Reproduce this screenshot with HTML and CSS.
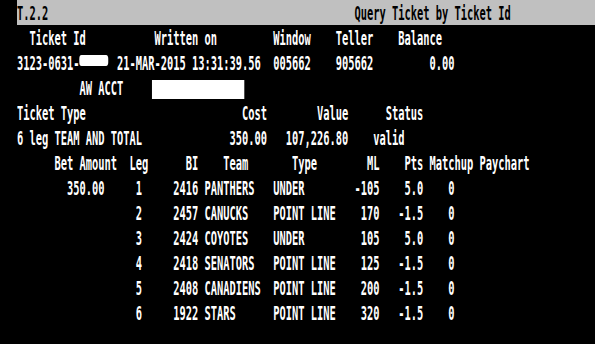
FILE: index.html
```html
<!DOCTYPE html>
<html lang="en">
<head>
    <meta charset="UTF-8">
    <meta name="viewport" content="width=device-width, initial-scale=1.0">
    <title>Query Ticket by Ticket Id</title>
    <link rel="stylesheet" href="styles.css">
</head>
<body>
    <div class="screen">
        <div class="term">
            <div class="line bar">T.2.2                                                 Query Ticket by Ticket Id</div>
            <div class="line">  Ticket Id           Written on         Window    Teller    Balance</div>
            <div class="line">3123-0631-<span class="redact-small"></span> 21-MAR-2015 13:31:39.56  005662    905662         0.00</div>
            <div class="line">          AW ACCT    <span class="redact-box"></span></div>
            <div class="line">Ticket Type                         Cost        Value      Status</div>
            <div class="line">6 leg TEAM AND TOTAL              350.00   107,226.80    valid</div>
            <div class="line">      Bet Amount  Leg      BI    Team       Type        ML    Pts Matchup Paychart</div>
            <div class="line">        350.00     1     2416 PANTHERS   UNDER        -105    5.0    0</div>
            <div class="line">                   2     2457 CANUCKS    POINT LINE    170   -1.5    0</div>
            <div class="line">                   3     2424 COYOTES    UNDER         105    5.0    0</div>
            <div class="line">                   4     2418 SENATORS   POINT LINE    125   -1.5    0</div>
            <div class="line">                   5     2408 CANADIENS  POINT LINE    200   -1.5    0</div>
            <div class="line">                   6     1922 STARS      POINT LINE    320   -1.5    0</div>
        </div>
    </div>
</body>
</html>
```

FILE: styles.css
```css
body {
    margin: 0;
    background-color: #000;
    overflow: hidden;
}
.screen {
    height: 344px;
    padding-left: 17px;
}
.term {
    width: 1060px;
    font-family: "DejaVu Sans Mono", monospace;
    font-size: 19px;
    font-weight: bold;
    color: #fff;
    transform: scaleX(0.5464); /* celdas estrechas como la consola */
    transform-origin: 0 0;
}
.line {
    height: 25px;
    padding-top: 1px;
    box-sizing: border-box;
    line-height: 24px;
    white-space: pre;
}
.bar {
    background-color: #c0c0c0;
    color: #000;
}
.redact-small {
    display: inline-block;
    width: 4.6ch;
    height: 11px;
    margin-right: 0.4ch;
    vertical-align: 4px;
    background-color: #fff;
    border-radius: 4px;
}
.redact-box {
    display: inline-block;
    width: 14.8ch;
    height: 19px;
    margin-left: 0.6ch;
    vertical-align: -4px;
    background-color: #fff;
}
```
